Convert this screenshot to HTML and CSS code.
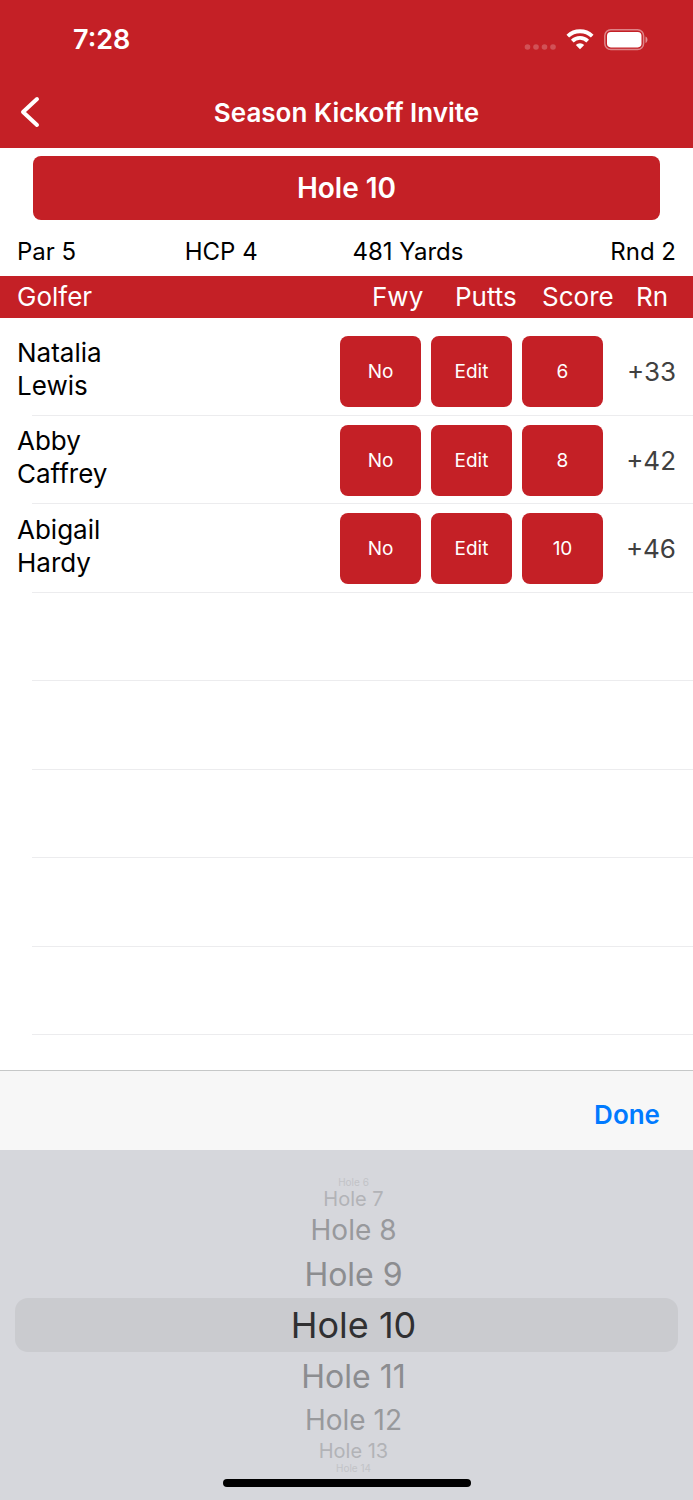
FILE: index.html
```html
<!DOCTYPE html>
<html lang="en">
<head>
<meta charset="utf-8">
<meta name="viewport" content="width=device-width, initial-scale=1">
<title>Season Kickoff Invite</title>
<link rel="stylesheet" href="styles.css">
</head>
<body>
<div class="app">
  <header class="header">
    <div class="status">
      <time class="clock">7:28</time>
      <div class="status-icons">
        <svg width="32" height="8" viewBox="0 0 32 8" aria-hidden="true"><g fill="#fff" opacity=".22"><circle cx="3.500" cy="4" r="2.800"/><circle cx="12" cy="4" r="2.800"/><circle cx="20.500" cy="4" r="2.800"/><circle cx="29" cy="4" r="2.800"/></g></svg>
        <svg class="wifi" width="28" height="22" viewBox="0 0 28 22" aria-hidden="true"><g fill="none" stroke="#fff" stroke-width="3.800"><path d="M1.800 7.200a17.500 17.500 0 0 1 24.400 0"/><path d="M6.300 12.100a11 11 0 0 1 15.400 0"/></g><path d="M14 20.300l-4.200-4.300a6 6 0 0 1 8.400 0z" fill="#fff"/></svg>
        <svg width="45" height="22" viewBox="0 0 45 22" aria-hidden="true"><rect x=".8" y=".8" width="38.800" height="19.800" rx="6" fill="none" stroke="#fff" stroke-opacity=".45" stroke-width="1.500"/><rect x="3" y="3" width="34.500" height="15.400" rx="3.800" fill="#fff"/><path d="M41.500 7.500c2.600 1 2.600 5.400 0 6.400z" fill="#fff" opacity=".5"/></svg>
      </div>
    </div>
    <nav class="nav">
      <button class="back" type="button" aria-label="Back"><svg width="20" height="32" viewBox="0 0 20 32" aria-hidden="true"><path d="M17 3L3 16l14 13" fill="none" stroke="#fff" stroke-width="4" stroke-linecap="round" stroke-linejoin="round"/></svg></button>
      <h1 class="title">Season Kickoff Invite</h1>
    </nav>
  </header>
  <main class="main">
    <button class="hole-button" type="button">Hole 10</button>
    <div class="info"><span>Par 5</span><span>HCP 4</span><span>481 Yards</span><span class="round">Rnd 2</span></div>
    <table class="scores">
      <thead><tr><th scope="col">Golfer</th><th class="col-fwy" scope="col">Fwy</th><th class="col-putts" scope="col">Putts</th><th class="col-score" scope="col">Score</th><th class="col-total" scope="col">Rn</th></tr></thead>
      <tbody>
        <tr class="row"><td class="name">Natalia<br>Lewis</td><td><button class="cell" type="button">No</button></td><td><button class="cell" type="button">Edit</button></td><td><button class="cell" type="button">6</button></td><td class="total">+33</td></tr>
        <tr class="row"><td class="name">Abby<br>Caffrey</td><td><button class="cell" type="button">No</button></td><td><button class="cell" type="button">Edit</button></td><td><button class="cell" type="button">8</button></td><td class="total">+42</td></tr>
        <tr class="row"><td class="name">Abigail<br>Hardy</td><td><button class="cell" type="button">No</button></td><td><button class="cell" type="button">Edit</button></td><td><button class="cell" type="button">10</button></td><td class="total">+46</td></tr>
        <tr class="row"><td colspan="5"></td></tr>
        <tr class="row"><td colspan="5"></td></tr>
        <tr class="row"><td colspan="5"></td></tr>
        <tr class="row"><td colspan="5"></td></tr>
        <tr class="row"><td colspan="5"></td></tr>
      </tbody>
    </table>
  </main>
  <section class="sheet">
    <div class="toolbar"><button class="done" type="button">Done</button></div>
    <ul class="wheel" role="listbox" aria-label="Hole">
      <li class="option edge" role="option">Hole 6</li>
      <li class="option far" role="option">Hole 7</li>
      <li class="option mid" role="option">Hole 8</li>
      <li class="option near" role="option">Hole 9</li>
      <li class="option current" role="option" aria-selected="true">Hole 10</li>
      <li class="option near" role="option">Hole 11</li>
      <li class="option mid" role="option">Hole 12</li>
      <li class="option far" role="option">Hole 13</li>
      <li class="option edge" role="option">Hole 14</li>
    </ul>
    <div class="home-indicator"></div>
  </section>
</div>
</body>
</html>
```
FILE: styles.css
```css
* { box-sizing: border-box; }

body {
  margin: 0;
  background: #fff;
  color: #000;
  font-family: Inter, "Liberation Sans", sans-serif;
  font-size: 26px;
}

button {
  margin: 0;
  padding: 0;
  border: 0;
  background: none;
  color: inherit;
  font: inherit;
}

svg { display: block; }

.app {
  display: flex;
  flex-direction: column;
  min-height: 100vh;
}

.header {
  background: #c42026;
  color: #fff;
}

.status {
  display: flex;
  align-items: center;
  justify-content: space-between;
  height: 76px;
  padding: 3px 44px 0 73px;
}

.clock {
  font-size: 27px;
  font-weight: 600;
}

.status-icons {
  display: flex;
  align-items: center;
  gap: 10px;
}

.status-icons svg:first-child { margin-top: 14px; }

.nav {
  display: grid;
  grid-template-columns: 60px 1fr 60px;
  align-items: center;
  height: 72px;
}

.back { padding-left: 20px; }

.title {
  margin: 0;
  font-size: 26px;
  font-weight: 600;
  text-align: center;
}

.main {
  display: flex;
  flex: 1;
  flex-direction: column;
}

.hole-button {
  height: 64px;
  margin: 8px 33px 0;
  border-radius: 8px;
  background: #c42026;
  color: #fff;
  font-size: 28px;
  font-weight: 600;
}

.info {
  display: grid;
  grid-template-columns: repeat(4, 1fr);
  gap: 12px;
  align-items: center;
  height: 56px;
  padding: 8px 17px 0;
  font-size: 24px;
  line-height: 28px;
}

.round { text-align: right; }

.scores {
  width: 100%;
  table-layout: fixed;
  border-collapse: collapse;
}

.scores thead {
  background: #c42026;
  color: #fff;
}

.scores th {
  height: 42px;
  padding: 0 0 0 17px;
  font-weight: 400;
  line-height: 32px;
  text-align: left;
  white-space: nowrap;
}

.scores .col-fwy { width: 91px; padding-left: 37px; }
.scores .col-putts { width: 91px; padding-left: 29px; }
.scores .col-score { width: 91px; padding-left: 25px; }
.scores .col-total { width: 85px; padding-left: 28px; }

.scores tbody::before {
  display: block;
  height: 9px;
  content: "";
}

.row {
  height: 88px;
  background: linear-gradient(#ececee, #ececee) 32px 100% / 100% 1px no-repeat;
}

.row:nth-child(odd) { height: 89px; }

.scores td { padding: 0; }

.scores .name {
  padding: 0 0 6px 17px;
  line-height: 33px;
}

.cell {
  display: block;
  width: 81px;
  height: 71px;
  margin: 0 auto;
  border-radius: 8px;
  background: #c42026;
  color: #fff;
  font-size: 19px;
}

.scores .total {
  padding-right: 17px;
  color: #404040;
  text-align: right;
}

.sheet {
  position: relative;
  background: #d6d7dc;
}

.toolbar {
  display: flex;
  align-items: center;
  justify-content: flex-end;
  height: 80px;
  padding: 8px 33px 0;
  border-top: 1px solid #c6c8c8;
  background: #f7f7f7;
}

.done {
  color: #007aff;
  font-weight: 600;
}

.wheel {
  margin: 0;
  padding: 26px 15px;
  list-style: none;
}

.option {
  display: flex;
  align-items: center;
  justify-content: center;
  padding-left: 14px;
  white-space: nowrap;
}

.current {
  height: 54px;
  border-radius: 13px;
  background: #cacbcf;
  color: #303032;
  font-size: 36px;
}

.near {
  height: 48px;
  color: #8c8d90;
  font-size: 32px;
}

.mid {
  height: 40px;
  color: #98999c;
  font-size: 28px;
}

.far {
  height: 22px;
  color: #b2b3b7;
  font-size: 20px;
  line-height: 22px;
}

.edge {
  height: 12px;
  color: #c2c3c7;
  font-size: 10px;
  line-height: 12px;
}

.home-indicator {
  position: absolute;
  bottom: 13px;
  left: 50%;
  width: 248px;
  height: 8px;
  margin-left: -124px;
  border-radius: 4px;
  background: #000;
}
```
